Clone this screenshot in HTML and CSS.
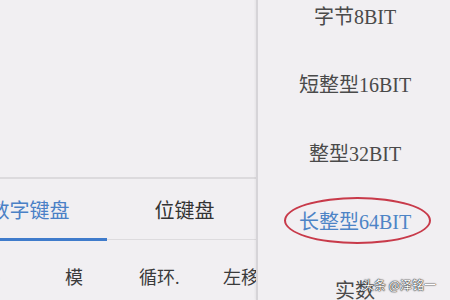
FILE: index.html
```html
<!DOCTYPE html>
<html lang="zh">
<head>
<meta charset="utf-8">
<link rel="stylesheet" href="styles.css">
</head>
<body>
<div class="screen">
  <div class="left">
    <div class="display"></div>
    <div class="tabs">
      <div class="tab active">数字键盘</div>
      <div class="tab">位键盘</div>
    </div>
    <div class="indicator"><div class="bar"></div><div class="rest"></div></div>
    <div class="keys">
      <span class="key k0">.</span>
      <span class="key k1">模</span>
      <span class="key k2">循环.</span>
      <span class="key k3">左移</span>
    </div>
  </div>
  <div class="menu">
    <div class="item">字节8BIT</div>
    <div class="item">短整型16BIT</div>
    <div class="item">整型32BIT</div>
    <div class="item selected"><span class="circled">长整型64BIT</span></div>
    <div class="item">实数</div>
  </div>
  <div class="watermark">头条 @泽铭一</div>
</div>
</body>
</html>
```
FILE: styles.css
```css
html, body {
  margin: 0;
  padding: 0;
}
body {
  width: 450px;
  height: 300px;
  overflow: hidden;
  background: #f1eff2;
  font-family: "Liberation Serif", "Noto Sans CJK SC", serif;
  color: #404040;
}
.screen {
  position: relative;
  display: flex;
  width: 450px;
  height: 300px;
  overflow: hidden;
}
.left {
  width: 256px;
  overflow: hidden;
  display: flex;
  flex-direction: column;
}
.display {
  height: 177px;
  flex: none;
  border-bottom: 2px solid #dcdadd;
}
.tabs {
  display: flex;
  height: 59px;
  margin-left: -48px;
  flex: none;
}
.tab {
  width: 155px;
  flex: none;
  display: flex;
  align-items: center;
  justify-content: center;
  font-size: 20px;
  padding-top: 2px;
  box-sizing: border-box;
  color: #333;
}
.tab.active {
  color: #4a80c6;
}
.indicator {
  display: flex;
  align-items: center;
  height: 3px;
  flex: none;
}
.bar {
  width: 107px;
  height: 3px;
  background: #3f7bcb;
}
.rest {
  flex: 1;
  height: 1px;
  background: #dddbde;
}
.keys {
  display: flex;
  align-items: center;
  height: 70px;
  flex: none;
  font-size: 18px;
  color: #3a3a3a;
}
.key {
  display: block;
  flex: none;
}
.k0 {
  width: 68px;
  margin-left: -3px;
  color: #999;
  font-size: 14px;
}
.k1 {
  width: 74px;
}
.k2 {
  width: 84px;
}
.menu {
  flex: 1;
  border-left: 2px solid #d6d4d8;
  box-shadow: -1px 0 2px rgba(0,0,0,0.05);
  display: flex;
  flex-direction: column;
  margin-top: -19px;
}
.item {
  height: 68.5px;
  flex: none;
  display: flex;
  align-items: center;
  justify-content: center;
  font-size: 20px;
  color: #4a4a4a;
  padding-left: 2px;
}
.item.selected {
  color: #4d84c6;
}
.circled {
  position: relative;
}
.circled::after {
  content: "";
  position: absolute;
  left: -15px;
  right: -20px;
  top: -9px;
  bottom: -9px;
  border: 2px solid #c83a4a;
  border-radius: 50%;
}
.watermark {
  position: absolute;
  left: 362px;
  top: 276px;
  font-family: "Noto Sans CJK SC", sans-serif;
  font-size: 12px;
  color: #fff;
  text-shadow: 0 0 1px #222, 0 0 1px #222, 0 0 2px #555;
}
```
